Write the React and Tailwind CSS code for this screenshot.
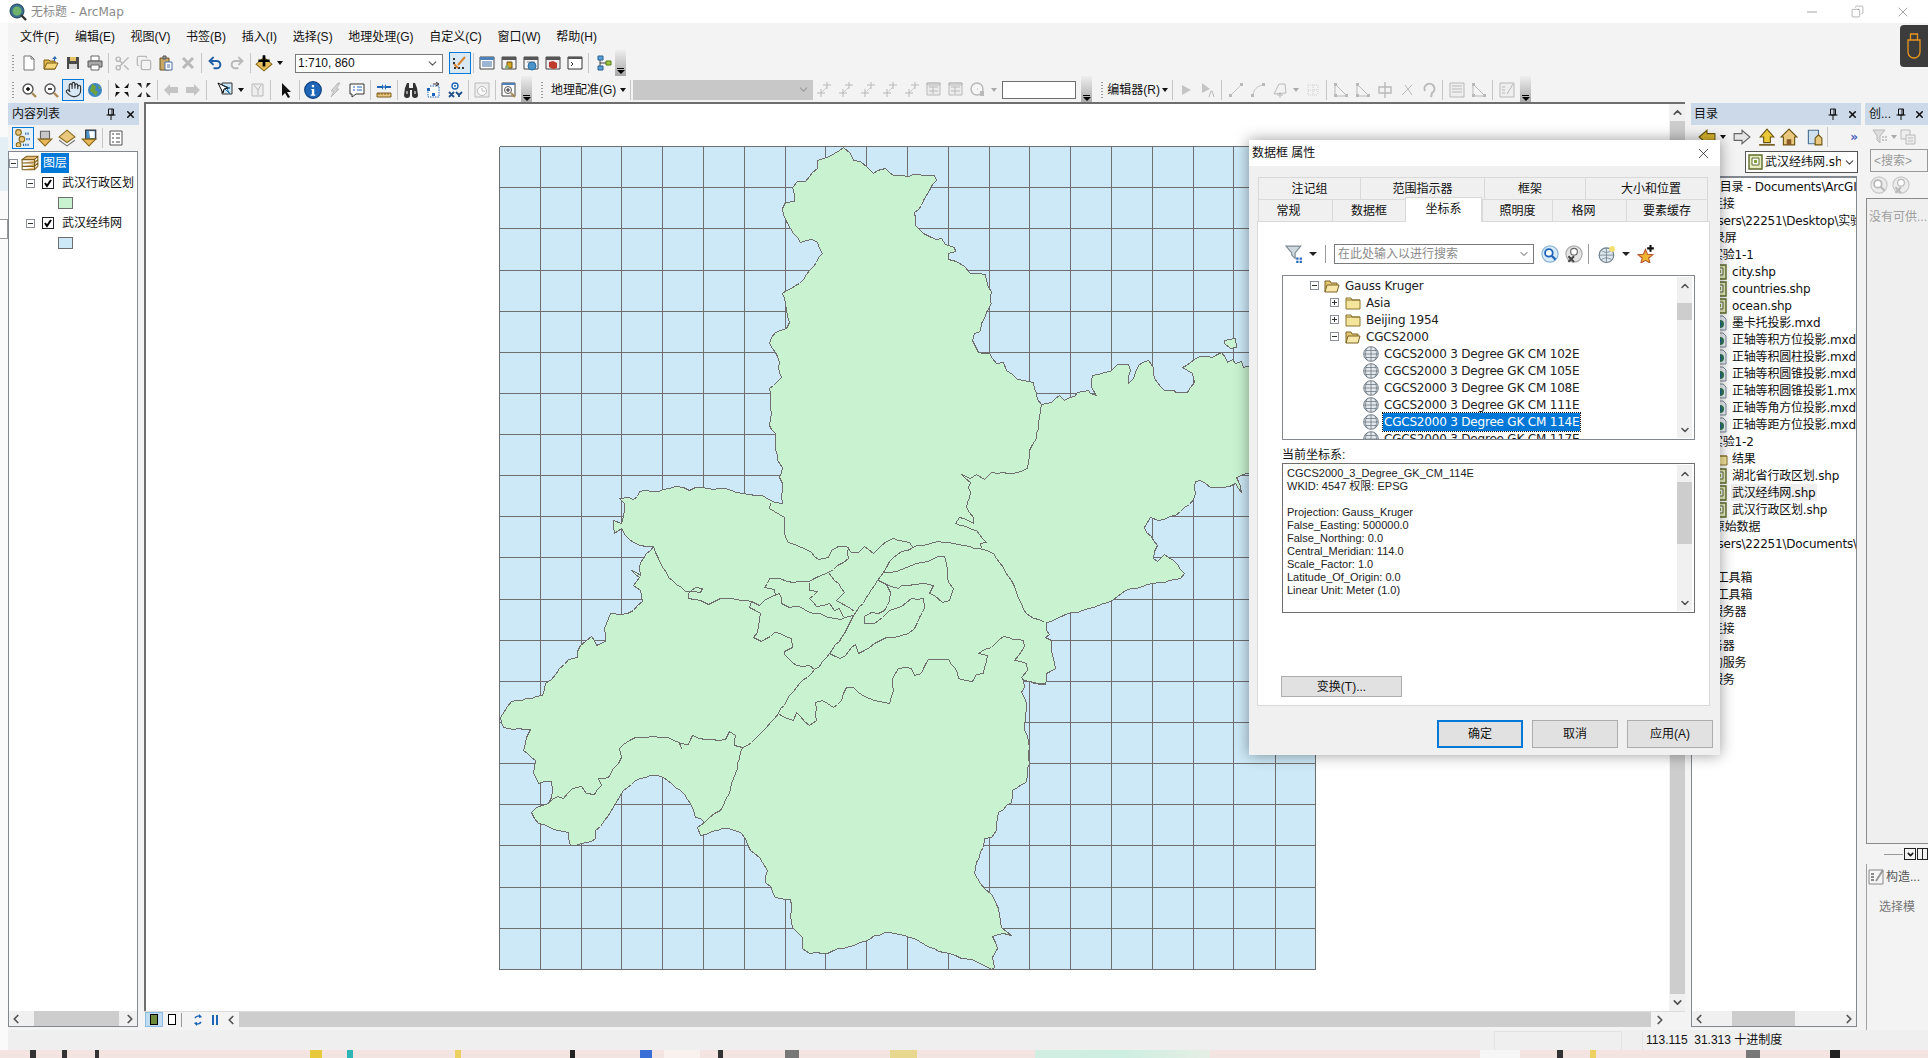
import { ChevronDown, ChevronUp, ChevronLeft, ChevronRight, Hand, Scissors, Undo2, Redo2, X, Minus, Copy } from 'lucide-react'

// ---------- map geometry, traced from the screenshot ----------
const z9 = ([x, y]) => [490 + x / 2.01, 130 + y / 3]
const z10 = ([x, y]) => [490 + x / 2.01, 560 + y / 3]
const z11 = ([x, y]) => [700 + x / 3, 500 + y / 3]

const OUTER_A = [[708,50],[722,68],[728,90],[742,93],[755,112],[767,130],[775,120],[792,114],[808,136],[838,138],[848,133],[890,135],[894,150],[880,180],[868,210],[865,225],[850,245],[852,285],[868,310],[885,322],[905,325],[912,343],[930,350],[933,362],[918,368],[918,388],[935,393],[950,408],[962,429],[992,433],[998,470],[1005,483],[1002,515],[1005,520],[995,545],[985,580],[983,602],[970,610],[967,630],[978,667],[1000,670],[1015,698],[1030,697],[1035,720],[1058,747],[1090,757],[1095,790],[1105,822],[1125,815],[1142,795],[1152,810],[1172,797],[1178,785],[1200,780],[1203,790],[1216,795],[1205,770],[1208,735],[1245,722],[1258,703],[1280,703],[1285,720],[1281,758],[1290,745],[1300,705],[1320,690],[1330,710],[1332,745],[1352,780],[1372,780],[1375,787],[1398,787],[1413,755],[1410,730],[1388,712],[1405,695],[1425,677],[1450,680],[1468,665],[1480,695],[1490,688],[1495,700],[1508,693],[1512,712],[1525,705],[1750,800],[1750,1030],[1525,1025],[1497,1040],[1508,1085],[1495,1060],[1470,1070],[1445,1070],[1425,1050],[1415,1052],[1412,1108],[1375,1155],[1340,1170],[1325,1162],[1312,1190],[1338,1245],[1330,1285],[1338,1292],[1352,1273],[1370,1290],[1392,1330]]
const OUTER_B = [[1385,55],[1330,68],[1275,90],[1250,118],[1200,145],[1165,157],[1115,187],[1115,210],[1122,222],[1114,232],[1125,240],[1128,285],[1133,325],[1115,340],[1113,372],[1070,360],[1072,380],[1065,395],[1075,430],[1072,510],[1082,560],[1078,640],[1075,665],[1048,690],[1045,725],[1020,755],[1015,810],[1005,830],[990,833],[988,860],[975,905],[970,940],[990,985],[1005,1003],[1020,1045],[1025,1100],[1045,1125],[1030,1118],[1008,1128],[1018,1165],[1008,1190],[1012,1220],[1005,1226],[965,1197],[945,1195],[920,1180],[880,1160],[840,1130],[800,1115],[770,1125],[760,1138],[730,1155],[665,1180],[640,1178],[625,1165],[625,1130],[605,1100],[600,1018],[570,1012],[562,980],[550,965],[555,930],[545,905],[520,870],[510,835],[500,815],[465,803],[420,826],[414,800],[428,785],[410,770],[400,730],[380,690],[345,650],[320,645],[290,660],[265,690],[235,765],[210,810],[210,835],[180,850],[158,855],[155,815],[135,810],[95,790],[80,755],[90,740],[115,728],[122,690],[120,662],[95,668],[85,640],[88,600],[65,570],[70,530],[78,508],[55,505],[25,500],[18,470],[40,422],[80,415],[102,405],[108,370],[130,340],[155,298],[172,292],[178,255],[200,228],[212,255],[230,243],[228,205],[240,160],[260,162],[285,150],[303,122],[300,90],[285,75],[298,50],[282,30]]
const OUTER_C = [[300,1335],[300,1295],[325,1248],[300,1245],[285,1235],[270,1215],[262,1195],[248,1208],[245,1170],[262,1178],[268,1120],[258,1105],[275,1100],[285,1108],[298,1083],[335,1082],[370,1068],[385,1072],[398,1080],[410,1072],[470,1075],[505,1090],[545,1095],[570,1115],[585,1118],[585,1060],[578,1040],[585,1010],[575,990],[570,910],[558,885],[563,850],[558,775],[582,740],[578,695],[570,665],[558,640],[570,605],[592,595],[598,575],[590,520],[585,490],[620,460],[640,420],[665,370],[655,335],[645,328],[622,335],[600,295],[585,235],[590,215],[610,213],[605,170],[615,152],[632,152],[655,115],[655,90],[690,70]]
const OUTER = [...OUTER_A.map(z9), ...OUTER_B.map(z10), ...OUTER_C.map(z9)]
const ISLAND = [[1473,630],[1495,625],[1498,650],[1485,655],[1473,640]].map(z9)

const INNER = [
  [[1105,822],[1100,880],[1095,925],[1082,960],[1078,1015],[1050,1030],[1005,1027],[990,1048],[975,1033],[962,1045],[945,1032],[962,1055],[960,1100],[955,1130],[968,1160],[968,1178],[940,1160],[933,1180],[975,1200],[995,1235],[983,1240],[985,1255]].map(z9),
  [[207,8],[203,25],[250,52],[248,95],[260,125],[300,140],[330,155],[350,178],[380,172],[390,150],[410,137],[435,137],[450,155],[470,155],[488,137],[515,158],[540,135],[575,115],[625,125],[635,143]].map(z11),
  [[160,718],[195,680],[230,640],[285,560],[340,508],[385,458],[430,398],[455,345],[520,255],[545,215],[575,170],[630,143],[695,125],[740,125],[835,145],[875,158],[905,200],[930,240],[950,295],[975,340],[995,355],[1030,365]].map(z11),
  [[545,215],[585,212],[645,188],[730,167],[738,210],[742,245],[755,265],[745,300],[722,305],[700,285],[685,278],[697,255],[668,250],[640,252],[600,255],[590,265],[570,258],[555,252],[530,240]].map(z11),
  [[555,252],[568,275],[565,300],[550,330],[530,340],[510,335],[490,348],[490,370],[520,370],[565,330],[600,318],[630,293],[665,295],[668,320],[655,350],[640,385],[620,400],[580,412],[555,410],[520,430],[472,460],[463,432],[418,473],[385,458]].map(z11),
  [...[[325,1248],[340,1300]].map(z9), ...[[355,50],[390,92],[420,95],[425,85],[410,80],[395,100],[395,115],[420,120],[437,133],[460,113]].map(z10), ...[[60,293],[150,302],[175,315],[190,300],[235,280],[240,310],[265,322],[295,317],[325,335],[355,338],[380,352],[420,357],[430,350],[455,345]].map(z11)],
  [[150,302],[145,320],[178,340],[168,395],[157,412],[180,423],[220,395],[270,415],[272,440],[248,452],[250,462],[285,495],[325,495],[340,508]].map(z11),
  [[380,215],[325,243],[258,243],[235,233],[205,235],[190,262],[218,268],[222,285]].map(z11),
  [[380,215],[430,275],[405,300],[460,332]].map(z11),
  [[325,245],[325,270],[348,272],[325,295],[345,318],[385,310],[400,330],[415,325],[425,350]].map(z11),
  [[380,215],[440,175],[440,140]].map(z11),
  [[230,638],[275,660],[285,635],[325,675],[345,660],[342,605],[362,600],[395,620],[420,600],[435,560],[455,560],[490,587],[520,600],[565,608],[575,570],[572,535],[592,503],[630,505],[638,525],[660,520],[682,478],[742,478],[762,505],[770,535],[812,543],[825,522],[845,520],[858,465],[830,458],[870,440],[905,407],[965,420],[970,438],[940,480],[975,490],[977,510],[960,530],[968,542],[1030,550]].map(z11),
  [[530,535],[505,562],[490,640],[478,700],[460,750],[428,785]].map(z10),
  [[505,562],[488,555],[490,525],[478,512],[470,538],[430,538],[405,525],[395,552],[378,550],[382,565],[378,545],[355,532],[340,530],[310,530],[290,530],[265,552],[258,565],[262,590],[245,625],[235,650],[215,655],[222,675],[208,703],[190,698],[180,678],[163,685],[145,713],[132,708],[115,730]].map(z10),
]

// breaks long segments up so the outlines look like digitised boundaries
function rough(pts, closed) {
  const list = closed ? [...pts, pts[0]] : pts
  const out = []
  for (let i = 0; i < list.length - 1; i++) {
    const [x1, y1] = list[i]
    const [x2, y2] = list[i + 1]
    const len = Math.hypot(x2 - x1, y2 - y1)
    const n = Math.max(1, Math.floor(len / 5))
    for (let k = 0; k < n; k++) {
      const t = k / n
      const x = x1 + (x2 - x1) * t
      const y = y1 + (y2 - y1) * t
      const h = Math.sin(x * 12.9 + y * 78.2) * 43758
      const off = k === 0 ? 0 : (h - Math.floor(h) - 0.5) * 1.8
      out.push([Math.round(x + (off * (y2 - y1)) / (len || 1)) + 0.5, Math.round(y - (off * (x2 - x1)) / (len || 1)) + 0.5])
    }
  }
  out.push([Math.round(list[list.length - 1][0]) + 0.5, Math.round(list[list.length - 1][1]) + 0.5])
  return out.map((p, i) => (i ? 'L' : 'M') + p[0] + ' ' + p[1]).join(' ')
}

const GRID_X = [498.5, 539.5, 580.5, 620.5, 661.5, 702.5, 743.5, 784.5, 824.5, 865.5, 906.5, 947.5, 988.5, 1028.5, 1069.5, 1110.5, 1151.5, 1192.5, 1232.5, 1274.5, 1314.5]
const GRID_Y = [146.5, 187.5, 228.5, 270.5, 311.5, 352.5, 393.5, 434.5, 475.5, 516.5, 557.5, 599.5, 640.5, 681.5, 722.5, 763.5, 804.5, 845.5, 887.5, 928.5, 969.5]

function MapView() {
  return (
    <svg width="1523" height="907" viewBox="145 104 1523 907" className="block">
      <rect x="498.5" y="146.5" width="816" height="823" fill="#cde8f7" />
      <g stroke="#6e6e6e" strokeWidth="1" shapeRendering="crispEdges">
        {GRID_X.map(x => <line key={x} x1={x} x2={x} y1="146.5" y2="969.5" />)}
        {GRID_Y.map(y => <line key={y} x1="498.5" x2="1314.5" y1={y} y2={y} />)}
      </g>
      <g fill="#c8f2d0" stroke="#6e6e6e" strokeWidth="1" shapeRendering="crispEdges">
        <path d={rough(OUTER, true) + ' Z'} />
        <path d={rough(ISLAND, true) + ' Z'} />
      </g>
      <g fill="none" stroke="#6e6e6e" strokeWidth="1" shapeRendering="crispEdges">
        {INNER.map((p, i) => <path key={i} d={rough(p, false)} />)}
      </g>
    </svg>
  )
}

// ---------- small toolbar icons ----------
const S = ({ children, size = 16 }) => (
  <svg width={size} height={size} viewBox="0 0 16 16" className="block">{children}</svg>
)
const GREY = '#b9b9b9'
const ICONS = {
  new: <S><path d="M3 1h7l3 3v11H3z" fill="#fff" stroke="#777" /><path d="M10 1v3h3" fill="none" stroke="#777" /></S>,
  open: <S><path d="M1 14V5h5l1 1h5v8z" fill="#e0b94f" stroke="#7a5a10" /><path d="M1 14l3-6h11l-3 6z" fill="#f5d77c" stroke="#7a5a10" /><path d="M9 4l3-3 2 3h-2v2h-1V4z" fill="#2b6cb0" /></S>,
  save: <S><path d="M2 2h12v12H2z" fill="#4a4a4a" /><path d="M5 2h6v4H5z" fill="#e3c46a" /><path d="M4 9h8v5H4z" fill="#d9d9d9" /></S>,
  print: <S><path d="M4 1h8v5H4z" fill="#fff" stroke="#666" /><path d="M1 6h14v6H1z" fill="#a9a9a9" stroke="#555" /><path d="M4 10h8v5H4z" fill="#fff" stroke="#666" /></S>,
  cut: <Scissors size={17} color={GREY} />,
  copy: <Copy size={16} color={GREY} />,
  paste: <S><path d="M2 3h9v12H2z" fill="#c9a769" stroke="#6b5426" /><path d="M5 1h3v3H5z" fill="#999" stroke="#555" /><path d="M7 7h7v8H7z" fill="#fff" stroke="#4a6fa5" /><path d="M9 10h3M9 12h3" stroke="#4a6fa5" /></S>,
  del: <S><path d="M3 3l10 10M13 3L3 13" stroke={GREY} strokeWidth="3" /></S>,
  undo: <Undo2 size={16} color="#1f5fa8" strokeWidth={3} />,
  redo: <Redo2 size={16} color={GREY} strokeWidth={3} />,
  add: <S size={18}><path d="M8 3l7 6-7 6-7-6z" fill="#e9bf5b" stroke="#8a6a1c" /><path d="M8 1v10M3 6h10" stroke="#000" strokeWidth="2.4" /></S>,
  edit: <S><path d="M2 13h12" stroke="#333" strokeDasharray="2 2" strokeWidth="2" /><path d="M2 9l4 4M13 2L6 10" stroke="#d9822b" strokeWidth="2" /><path d="M2 3v6" stroke="#333" strokeDasharray="2 2" strokeWidth="2" /></S>,
  win1: <S><path d="M1 2h14v12H1z" fill="#fff" stroke="#444" /><path d="M1 2h14v3H1z" fill="#4d7fb8" /><path d="M3 7h10M3 9h10M3 11h10" stroke="#3a6ea5" /></S>,
  win2: <S><path d="M1 2h14v12H1z" fill="#f5f5f5" stroke="#444" /><path d="M1 2h14v3H1z" fill="#555" /><path d="M6 7h5v6H6z" fill="#d8a520" stroke="#6b5410" /><circle cx="6" cy="12" r="2" fill="#8a7" /></S>,
  win3: <S><path d="M1 2h14v12H1z" fill="#f5f5f5" stroke="#444" /><path d="M1 2h14v3H1z" fill="#555" /><path d="M4 7h8" stroke="#888" /><circle cx="9" cy="11" r="4" fill="#4b93c9" stroke="#2a6d9e" /></S>,
  win4: <S><path d="M1 2h14v12H1z" fill="#eee" stroke="#444" /><path d="M1 2h14v3H1z" fill="#555" /><path d="M4 7l4-1 4 2v5l-4 1-4-2z" fill="#c0392b" /></S>,
  win5: <S><path d="M1 2h14v12H1z" fill="#fff" stroke="#333" /><path d="M1 2h14v2H1z" fill="#555" /><path d="M4 7l2 2-2 2" fill="none" stroke="#333" /></S>,
  model: <S><path d="M2 1h5v4H2zM2 11h5v4H2z" fill="#5aa0dc" stroke="#24608f" /><path d="M10 6h5v4h-5z" fill="#9fc93c" stroke="#557a12" /><path d="M4 5v6M4 8h6" stroke="#444" /></S>,
  zin: <S><circle cx="7" cy="7" r="5" fill="#fff" stroke="#555" strokeWidth="1.4" /><path d="M5 7h4M7 5v4" stroke="#000" strokeWidth="1.4" /><path d="M11 11l4 4" stroke="#a85" strokeWidth="2.4" /></S>,
  zout: <S><circle cx="7" cy="7" r="5" fill="#fff" stroke="#555" strokeWidth="1.4" /><path d="M5 7h4" stroke="#000" strokeWidth="1.4" /><path d="M11 11l4 4" stroke="#a85" strokeWidth="2.4" /></S>,
  hand: <Hand size={17} color="#333" strokeWidth={1.6} />,
  globe: <S><circle cx="8" cy="8" r="7" fill="#3f87c4" /><path d="M5 2l4 2-1 4 3 2-2 4-3-3-3-2 1-4z" fill="#6fa33c" /><path d="M11 3l3 3-2 1z" fill="#6fa33c" /></S>,
  fin: <S><path d="M1 1l5 5H2zM15 1l-5 5h4zM1 15l5-5H2zM15 15l-5-5h4z" fill="#111" /></S>,
  fout: <S><path d="M6 6L1 1h4zM10 6l5-5h-4zM6 10l-5 5h4zM10 10l5 5h-4z" fill="#222" /></S>,
  back: <S><path d="M1 8l6-6v3h8v6H7v3z" fill="#c4c4c4" /></S>,
  fwd: <S><path d="M15 8L9 2v3H1v6h8v3z" fill="#c4c4c4" /></S>,
  sel: <S><path d="M5 1h10v11H5z" fill="#cfe6f5" stroke="#333" /><path d="M6 5l7 7M5 3l8 3-3 1 3 5" fill="#fff" stroke="#1d6fa8" /><path d="M1 1l5 10 1-4 4-1z" fill="#fff" stroke="#000" /></S>,
  clear: <S><path d="M3 2h11v12H3z" fill="#eee" stroke={GREY} /><path d="M5 3l4 5 3-5M9 8v5" fill="none" stroke={GREY} /></S>,
  arrow: <S><path d="M4 1l9 9H9l3 5-2 1-3-5-3 3z" fill="#111" /></S>,
  info: <S size={18}><circle cx="8" cy="8" r="7.4" fill="#1f66b8" stroke="#0e3e7c" /><path d="M7 3.5h2v2H7zM6.5 7h2.6v5H10v1H6v-1h1V8h-.5z" fill="#fff" /></S>,
  bolt: <S><path d="M11 1L4 9h3l-3 6 8-8H9l4-6z" fill="#d6d6d6" stroke={GREY} /></S>,
  popup: <S><path d="M1 2h14v10H7l-4 3v-3H1z" fill="#fff" stroke="#333" /><path d="M4 5h2M8 5h5M4 8h2M8 8h5" stroke="#1f66b8" /></S>,
  measure: <S><path d="M1 11h14v4H1z" fill="#e9c77d" stroke="#7c5f1e" /><path d="M3 11v2M6 11v2M9 11v2M12 11v2" stroke="#7c5f1e" /><path d="M1 5h5M10 5h5" stroke="#1f66b8" strokeWidth="2" /><path d="M6 2v6l2-3zM10 2v6L8 5z" fill="#1f66b8" /></S>,
  bino: <S><path d="M2 6l2-5h2v5h4V1h2l2 5 1 7a2 2 0 0 1-6 0V8H7v5a2 2 0 0 1-6 0z" fill="#333" /><path d="M3 9h2v3H3zM11 9h2v3h-2z" fill="#999" /></S>,
  route: <S><path d="M5 4h9v11H3V8" fill="#fff" stroke="#1f66b8" strokeDasharray="1.5 1" /><path d="M8 2h5M11 0l3 2-3 2" fill="none" stroke="#333" /><rect x="2" y="6" width="3" height="3" fill="#1f66b8" /><rect x="7" y="11" width="3" height="3" fill="#1f66b8" /></S>,
  xy: <S><circle cx="8" cy="4" r="3" fill="#fff" stroke="#1f66b8" strokeWidth="1.4" /><circle cx="8" cy="4" r="1" fill="#1f66b8" /><path d="M2 10l5 5M7 10l-5 5M9 10l3 3 3-3M12 13v2" fill="none" stroke="#1f4f88" strokeWidth="1.8" /></S>,
  time: <S><path d="M1 1h14v14H1z" fill="#eee" stroke={GREY} /><circle cx="8" cy="9" r="4.5" fill="#fff" stroke={GREY} /><path d="M8 6v3h3" fill="none" stroke={GREY} /></S>,
  mag: <S><path d="M1 1h13v13H1z" fill="#fff" stroke="#444" /><path d="M1 1h13v2H1z" fill="#4d7fb8" /><circle cx="7" cy="8" r="3.5" fill="#fff" stroke="#555" /><path d="M5 8h4M7 6v4" stroke="#222" /><path d="M10 11l4 4" stroke="#a85" strokeWidth="2" /></S>,
  geo: <S><path d="M1 11h8M5 7v8M7 3h8M11 0v7" stroke={GREY} /><path d="M5 11l6-6" stroke={GREY} strokeDasharray="2 1" /></S>,
  geoBox: <S><path d="M1 1h13v12H1z" fill="#ececec" stroke={GREY} /><path d="M1 1h13v2H1zM3 5h9M3 9h9M7 5v7" fill="none" stroke={GREY} /></S>,
  rot: <S><circle cx="7" cy="7" r="6" fill="#f5f5f5" stroke={GREY} strokeWidth="1.5" /><path d="M7 7h1" stroke={GREY} /><path d="M10 9h4v5h-4z" fill={GREY} /></S>,
  seg: <S><path d="M2 14L14 2" stroke="#c4c4c4" /><rect x="1" y="12" width="3" height="3" fill={GREY} /><rect x="12" y="1" width="3" height="3" fill={GREY} /></S>,
  curve: <S><path d="M3 14C3 8 7 4 13 3" fill="none" stroke="#c4c4c4" /><rect x="1" y="12" width="3" height="3" fill={GREY} /><rect x="12" y="1" width="3" height="3" fill={GREY} /></S>,
  poly: <S><path d="M2 12L7 2h6l1 9z" fill="none" stroke={GREY} /><path d="M8 10v6M5 13h6" stroke={GREY} /></S>,
  play: <S><path d="M4 3l9 5-9 5z" fill="#c4c4c4" /></S>,
  playA: <S><path d="M2 1l8 6-8 4z" fill="#c4c4c4" /><path d="M9 15l2-6h1l2 6" fill="none" stroke={GREY} /></S>,
  nodes: <S><path d="M3 3h10M3 8h10M3 13h10M3 3v10M8 3v10M13 3v10" stroke="#cfcfcf" strokeDasharray="1 1" /></S>,
  tri: <S><path d="M2 14L2 2l12 12z" fill="none" stroke={GREY} /><rect x="1" y="1" width="3" height="3" fill={GREY} /><rect x="1" y="12" width="3" height="3" fill={GREY} /><rect x="12" y="12" width="3" height="3" fill={GREY} /></S>,
  split: <S><path d="M2 5h12v6H2zM8 0v16" fill="none" stroke={GREY} strokeWidth="1.4" /></S>,
  cross: <S><path d="M3 13L13 3M6 3l7 10" stroke={GREY} /></S>,
  loop: <S><path d="M4 9a5 5 0 1 1 7 2l-1 4" fill="none" stroke={GREY} strokeWidth="2" /></S>,
  attr: <S><path d="M1 1h14v14H1z" fill="#eee" stroke={GREY} /><path d="M3 4h10M3 7h10M3 10h10" stroke={GREY} /></S>,
  sketch: <S><path d="M1 1h14v14H1z" fill="#eee" stroke={GREY} /><path d="M8 12L14 2M3 5h3M3 8h3M3 11h3" stroke={GREY} /></S>,
  tocList: <S size={18}><circle cx="4" cy="3" r="2.5" fill="#e9c77d" stroke="#8a6a1c" /><circle cx="7" cy="9" r="2.5" fill="#e9c77d" stroke="#8a6a1c" /><circle cx="4" cy="14" r="2" fill="#e9c77d" stroke="#8a6a1c" /><path d="M10 4h4M11 9h4M8 14h6" stroke="#1f66b8" strokeDasharray="1 1" strokeWidth="2" /></S>,
  tocDb: <S size={18}><path d="M4 2h8v7H4z" fill="#c8c8c8" stroke="#666" /><path d="M2 9h12l-6 6z" fill="#e9b95a" stroke="#8a6a1c" /></S>,
  tocLayers: <S size={18}><path d="M8 1l7 6-7 5-7-5z" fill="#e9c77d" stroke="#8a6a1c" /><path d="M1 10l7 5 7-5" fill="none" stroke="#777" /></S>,
  tocSel: <S size={18}><path d="M5 1h9v8H5z" fill="#4b93c9" stroke="#333" /><path d="M8 2h5v6H9z" fill="#fff" /><path d="M2 9h12l-6 6z" fill="#e9b95a" stroke="#8a6a1c" /></S>,
  tocOpt: <S><path d="M2 1h12v14H2z" fill="#fff" stroke="#555" /><path d="M4 4h2M8 4h4M4 8h2M8 8h4M4 12h2M8 12h4" stroke="#444" /></S>,
  catBack: <S size={18}><path d="M1 8l7-6v3h7v6H8v3z" fill="#d8b52f" stroke="#6b5410" /></S>,
  catFwd: <S size={18}><path d="M15 8L8 2v3H1v6h7v3z" fill="#e6e6e6" stroke="#666" /></S>,
  catUp: <S size={18}><path d="M8 1l6 7h-3v5H5V8H2z" fill="#e9c936" stroke="#6b5410" /><path d="M1 15h14" stroke="#6b5410" strokeWidth="1.4" /></S>,
  catHome: <S size={18}><path d="M8 1L1 8h2v7h10V8h2z" fill="#e9c77d" stroke="#6b5410" /><path d="M6 10h4v5H6z" fill="#8a5a2b" /></S>,
  catDb: <S size={18}><path d="M3 2h9v12H3z" fill="#cfe0ee" stroke="#4a6f8f" /><path d="M9 9l3-3 3 3v6H9z" fill="#e9c77d" stroke="#6b5410" /></S>,
  shp: <S><path d="M1 1h13v14H1z" fill="#e7edc0" stroke="#5d6b2a" strokeWidth="1.4" /><path d="M4 4h7v7H4z" fill="#fff" stroke="#5d6b2a" /><path d="M6 6h3v3H6z" fill="#7fa33a" /></S>,
  mxd: <S><path d="M2 1h9l3 3v11H2z" fill="#eef3f8" stroke="#7a8a9a" /><circle cx="8" cy="9" r="4" fill="#2f7a5a" /><path d="M6 7h3v4H6z" fill="#2366a8" /></S>,
  filter: <S size={18}><path d="M1 1h13L9 7v5L6 9V7z" fill="#cfd8dc" stroke="#7b8a92" /><path d="M10 11h2v2h-2zM13 11h2v2h-2zM10 14h2v2h-2zM13 14h2v2h-2z" fill="#1f66b8" /></S>,
  search: <S size={18}><circle cx="8" cy="8" r="7.2" fill="#d9ebf8" stroke="#8ab6d6" /><circle cx="7" cy="7" r="3.4" fill="#fff" stroke="#1f66b8" strokeWidth="1.6" /><path d="M9.5 9.5l3.5 3.5" stroke="#1f66b8" strokeWidth="2" /></S>,
  unsearch: <S size={18}><circle cx="8" cy="8" r="7.2" fill="#e4e4e4" stroke="#aaa" /><circle cx="8" cy="6" r="3" fill="#fff" stroke="#666" /><path d="M3 10l5 5M8 10l-5 5" stroke="#444" strokeWidth="1.8" /></S>,
  world: <S size={18}><circle cx="7.5" cy="9" r="6.5" fill="#dfe7ee" stroke="#6d7f8c" /><path d="M1 9h13M7.5 2.5v13M3 5c3 2 6 2 9 0M3 13c3-2 6-2 9 0" fill="none" stroke="#6d7f8c" strokeWidth=".7" /><circle cx="12.5" cy="3.5" r="2.6" fill="#f4e070" /></S>,
  star: <S size={18}><path d="M7.5 4l1.8 4.2 4.7.4-3.6 3 1.1 4.4-4-2.4-4 2.4 1.1-4.4-3.6-3 4.7-.4z" fill="#f2b632" stroke="#b5562a" /><path d="M12 0v6M9 3h6" stroke="#111" strokeWidth="1.8" /></S>,
  folderOpen: <S><path d="M1 14V3h5l1 2h6v2" fill="#e3c873" stroke="#7a6224" /><path d="M1 14l2-7h12l-2 7z" fill="#f7e7a8" stroke="#7a6224" /></S>,
  folder: <S><path d="M1 14V3h5l1 2h8v9z" fill="#f5e59c" stroke="#8a7430" /><path d="M1 5h14" stroke="#8a7430" /></S>,
  gridGlobe: <S><circle cx="8" cy="8" r="7.3" fill="#e4e8ec" stroke="#6f7b85" /><path d="M1 8h14M8 1v14M2.5 4.5h11M2.5 11.5h11M4 2c-2 4-2 8 0 12M12 2c2 4 2 8 0 12" fill="none" stroke="#6f7b85" strokeWidth=".8" /></S>,
  layers: <S size={18}><path d="M1 5h11l3-3H5zM1 8h11l3-3M1 11h11l3-3M1 14h11l3-3M1 5v9M12 5v9M15 2v9" fill="#e6bc74" stroke="#7c5f1e" strokeWidth=".9" /></S>,
  gCreate: <S><path d="M1 1h12L8 7v7L5 11V7z" fill="#ddd" stroke={GREY} /><path d="M10 8h2M13 8h2M10 11h2M13 11h2" stroke={GREY} strokeWidth="1.4" /></S>,
  gPages: <S><path d="M1 1h9v9H1z" fill="#eee" stroke={GREY} /><path d="M6 6h9v9H6z" fill="#eee" stroke={GREY} /><path d="M8 9h5M8 12h5" stroke={GREY} /></S>,
  gSearch: <S size={18}><circle cx="8" cy="8" r="7.2" fill="#ececec" stroke="#c8c8c8" /><circle cx="7" cy="7" r="3.4" fill="#fff" stroke={GREY} strokeWidth="1.6" /><path d="M9.5 9.5l3.5 3.5" stroke={GREY} strokeWidth="2" /></S>,
  gUnsearch: <S size={18}><circle cx="8" cy="8" r="7.2" fill="#ececec" stroke="#c8c8c8" /><circle cx="8" cy="6" r="3" fill="#fff" stroke={GREY} /><path d="M3 10l5 5M8 10l-5 5" stroke={GREY} strokeWidth="1.8" /></S>,
  sketchColor: <S><path d="M1 1h14v14H1z" fill="#f5f5f5" stroke="#888" /><path d="M8 12L15 1" stroke="#999" strokeWidth="2" /><path d="M3 5h3M3 8h3M3 11h3" stroke="#666" strokeWidth="1.4" /></S>,
}

const Tool = ({ name }) => <div className="w-[22px] h-[22px] flex items-center justify-center shrink-0">{ICONS[name]}</div>
const Sep = () => <div className="w-[5px] h-[20px] flex justify-center shrink-0"><div className="w-px h-full bg-[#c6c6c6]" /></div>
const Drop = ({ grey }) => (
  <div className="w-[10px] h-[22px] flex items-center justify-center shrink-0">
    <div className={`w-0 h-0 border-x-[3px] border-x-transparent border-t-[4px] ${grey ? 'border-t-[#aaaaaa]' : 'border-t-[#111]'}`} />
  </div>
)
const Grip = () => (
  <div className="w-[10px] h-[20px] flex flex-col items-center justify-center gap-[2px] shrink-0">
    {[0, 1, 2, 3, 4, 5].map(i => <div key={i} className="w-[2px] h-px bg-[#9a9a9a]" />)}
  </div>
)
const ToolEnd = () => (
  <div className="w-[11px] h-full flex flex-col items-center justify-end pb-[2px] bg-gradient-to-b from-[#eeeeee] to-[#a8a8a8] shrink-0">
    <div className="w-[7px] h-px bg-black mb-px" />
    <div className="w-0 h-0 border-x-[4px] border-x-transparent border-t-[4px] border-t-black" />
  </div>
)
const Pin = () => (
  <svg width="10" height="12" viewBox="0 0 10 12" className="block"><path d="M2.5 1h5v6h-5zM6 1v6M0.5 7h9M5 7v5" fill="none" stroke="#111" /></svg>
)
const PanelX = () => <X size={11} color="#111" strokeWidth={3.4} />

// ---------- top chrome ----------
const MENUS = ['文件(F)', '编辑(E)', '视图(V)', '书签(B)', '插入(I)', '选择(S)', '地理处理(G)', '自定义(C)', '窗口(W)', '帮助(H)']

function TitleBar() {
  return (
    <div className="h-[23px] bg-white flex items-center shrink-0 pl-[9px]">
      <svg width="18" height="18" viewBox="0 0 18 18" className="block shrink-0">
        <circle cx="8" cy="8" r="7" fill="#3a6f8f" stroke="#1f4358" />
        <circle cx="8" cy="8" r="4.5" fill="#6fb36a" />
        <path d="M12 12l5 5" stroke="#333" strokeWidth="2.4" />
      </svg>
      <span className="ml-[4px] text-[12px] text-[#8a8a8a] [font-family:'DejaVu_Sans','Noto_Sans_CJK_SC',sans-serif]">无标题 - ArcMap</span>
      <div className="ml-auto flex items-center pr-[17px] gap-[31px] text-[#777]">
        <Minus size={16} strokeWidth={1} />
        <Copy size={13} strokeWidth={1} className="-scale-x-100" />
        <X size={16} strokeWidth={1} />
      </div>
    </div>
  )
}

function Toolbar1() {
  return (
    <div className="h-[26px] flex items-center">
      <Grip />
      <Tool name="new" /><Tool name="open" /><Tool name="save" /><Tool name="print" /><Sep />
      <Tool name="cut" /><Tool name="copy" /><Tool name="paste" /><Tool name="del" /><Sep />
      <Tool name="undo" /><Tool name="redo" /><Sep />
      <Tool name="add" /><Drop />
      <div className="ml-[10px] w-[148px] h-[19px] bg-white border border-[#7a7a7a] flex items-center pl-[2px] pr-[3px] text-[12px] text-[#111]">
        <span className="flex-1">1:710, 860</span>
        <ChevronDown size={13} color="#555" />
      </div>
      <div className="ml-[6px] w-[22px] h-[22px] border border-[#0078d7] bg-[#d8e8f5] flex items-center justify-center">{ICONS.edit}</div>
      <Sep />
      <Tool name="win1" /><Tool name="win2" /><Tool name="win3" /><Tool name="win4" /><Tool name="win5" /><Sep />
      <div className="ml-[2px]"><Tool name="model" /></div>
      <div className="h-[26px]"><ToolEnd /></div>
    </div>
  )
}

function Toolbar2() {
  return (
    <div className="h-[27px] flex items-center">
      <Grip />
      <Tool name="zin" /><Tool name="zout" />
      <div className="w-[22px] h-[22px] border border-[#0078d7] bg-[#d8e8f5] flex items-center justify-center shrink-0">{ICONS.hand}</div>
      <Tool name="globe" /><Sep />
      <Tool name="fin" /><Tool name="fout" /><Sep />
      <Tool name="back" /><Tool name="fwd" /><Sep />
      <div className="ml-[5px]"><Tool name="sel" /></div><Drop />
      <Tool name="clear" /><Sep />
      <div className="ml-[2px]"><Tool name="arrow" /></div><Sep />
      <Tool name="info" /><Tool name="bolt" /><Tool name="popup" /><Sep />
      <Tool name="measure" /><Sep />
      <Tool name="bino" /><Tool name="route" /><Tool name="xy" /><Sep />
      <Tool name="time" /><Sep />
      <Tool name="mag" />
      <div className="h-[27px] ml-px"><ToolEnd /></div>
      {/* georeferencing toolbar */}
      <div className="ml-[5px]"><Grip /></div>
      <span className="ml-[4px] text-[12px] text-[#111]">地理配准(G)</span>
      <div className="ml-[2px]"><Drop /></div>
      <Sep />
      <div className="w-[180px] h-[20px] bg-[#c8c8c8] flex items-center justify-end pr-[3px] shrink-0">
        <ChevronDown size={13} color="#9a9a9a" />
      </div>
      <Tool name="geo" /><Tool name="geo" /><Tool name="geo" /><Tool name="geo" />
      <Tool name="geo" /><Tool name="geoBox" /><Tool name="geoBox" /><Tool name="rot" /><Drop grey />
      <div className="ml-[3px] w-[74px] h-[18px] bg-white border border-[#6e6e6e] shrink-0" />
      <div className="ml-[5px] h-[27px]"><ToolEnd /></div>
      {/* editor toolbar */}
      <div className="ml-[5px]"><Grip /></div>
      <span className="text-[12px] text-[#111]">编辑器(R)</span>
      <Drop />
      <Sep />
      <Tool name="play" /><Tool name="playA" /><Sep />
      <div className="ml-px"><Tool name="seg" /></div><Tool name="curve" /><Tool name="poly" /><Drop grey />
      <div className="ml-px"><Tool name="nodes" /></div><Sep />
      <div className="ml-px"><Tool name="tri" /></div><Tool name="tri" /><Tool name="split" /><Tool name="cross" /><Tool name="loop" /><Sep />
      <div className="ml-px"><Tool name="attr" /></div><Tool name="tri" /><Sep />
      <div className="ml-px"><Tool name="sketch" /></div>
      <div className="h-[27px] ml-[2px]"><ToolEnd /></div>
    </div>
  )
}

// ---------- left table of contents ----------
const ExpandBox = ({ plus }) => (
  <div className="w-[9px] h-[9px] border border-[#8a8f99] bg-white relative shrink-0">
    <div className="absolute left-px right-px top-[3px] h-px bg-[#333]" />
    {plus && <div className="absolute top-px bottom-px left-[3px] w-px bg-[#333]" />}
  </div>
)
const Check = () => (
  <div className="w-[12px] h-[12px] border border-[#222] bg-white flex items-center justify-center shrink-0">
    <svg width="10" height="10" viewBox="0 0 10 10"><path d="M2 5l2 3 4-6" fill="none" stroke="#000" strokeWidth="2" /></svg>
  </div>
)

function TocPanel() {
  return (
    <div className="w-[131px] flex flex-col shrink-0">
      <div className="h-[22px] bg-[#cbd9e8] flex items-center pl-[4px] text-[12px] text-[#111] shrink-0">
        <span className="flex-1">内容列表</span>
        <div className="mr-[9px]"><Pin /></div>
        <div className="mr-[3px]"><PanelX /></div>
      </div>
      <div className="h-[26px] flex items-center pl-[4px] shrink-0">
        <div className="w-[22px] h-[22px] border border-[#0078d7] bg-[#e6f0f8] flex items-center justify-center">{ICONS.tocList}</div>
        <Tool name="tocDb" /><Tool name="tocLayers" /><Tool name="tocSel" /><Sep /><Tool name="tocOpt" />
      </div>
      <div className="flex-1 bg-white border border-[#828790] flex flex-col min-h-0 mb-[3px] mr-px text-[12px] text-[#111]">
        <div className="h-[20px] mt-[1px] flex items-center">
          <ExpandBox />
          <div className="ml-[3px]">{ICONS.layers}</div>
          <span className="ml-[2px] h-[20px] px-[2px] leading-[20px] bg-[#0078d7] text-white">图层</span>
        </div>
        <div className="h-[20px] flex items-center pl-[17px]">
          <ExpandBox />
          <div className="ml-[7px]"><Check /></div>
          <span className="ml-[8px] whitespace-nowrap">武汉行政区划</span>
        </div>
        <div className="h-[20px] flex items-center pl-[49px]">
          <div className="w-[15px] h-[12px] bg-[#c8f2d0] border border-[#6e6e6e]" />
        </div>
        <div className="h-[20px] flex items-center pl-[17px]">
          <ExpandBox />
          <div className="ml-[7px]"><Check /></div>
          <span className="ml-[8px] whitespace-nowrap">武汉经纬网</span>
        </div>
        <div className="h-[20px] flex items-center pl-[49px]">
          <div className="w-[15px] h-[12px] bg-[#cde8f7] border border-[#6e6e6e]" />
        </div>
        <div className="flex-1" />
        <div className="h-[15px] flex bg-[#f0f0f0] items-center">
          <ChevronLeft size={14} color="#555" strokeWidth={3} />
          <div className="ml-[11px] w-[85px] h-full bg-[#cdcdcd]" />
          <div className="ml-auto"><ChevronRight size={14} color="#555" strokeWidth={3} /></div>
        </div>
      </div>
    </div>
  )
}

// ---------- map view column ----------
function MapColumn() {
  return (
    <div className="w-[1541px] ml-[5px] flex flex-col shrink-0 mb-[3px]">
      <div className="flex-1 min-h-0 flex border-t-2 border-l-2 border-[#6e6e6e] -mt-px">
        <div className="w-[1523px] bg-white overflow-hidden">
          <MapView />
        </div>
        <div className="w-[15px] ml-px flex flex-col items-center bg-[#f0f0f0]">
          <div className="h-[17px] flex items-center"><ChevronUp size={13} color="#505050" strokeWidth={3} /></div>
          <div className="w-full flex-1 bg-[#cdcdcd]" />
          <div className="h-[17px] flex items-center"><ChevronDown size={13} color="#505050" strokeWidth={3} /></div>
        </div>
      </div>
      <div className="h-[16px] flex items-center border-t border-[#dcdcdc] shrink-0">
        <div className="w-[18px] h-[15px] ml-[1px] bg-[#bfdcf3] border border-[#8cbce4] flex items-center justify-center">
          <div className="w-[8px] h-[11px] bg-[#6c8a3a] border border-black" />
        </div>
        <div className="w-[18px] h-[15px] flex items-center justify-center">
          <div className="w-[8px] h-[11px] bg-white border border-black" />
        </div>
        <div className="w-px h-[14px] bg-[#9a9a9a]" />
        <div className="ml-[8px] w-[16px] flex justify-center">
          <svg width="10" height="12" viewBox="0 0 10 12"><path d="M8 3a4 4 0 0 0-6 1M2 9a4 4 0 0 0 6-1" fill="none" stroke="#1f66b8" strokeWidth="1.5" /><path d="M6 0l3 3-3 1zM4 12L1 9l3-1z" fill="#1f66b8" /></svg>
        </div>
        <div className="w-[18px] flex justify-center gap-[2px]">
          <div className="w-[2px] h-[10px] bg-[#1f66b8]" /><div className="w-[2px] h-[10px] bg-[#1f66b8]" />
        </div>
        <ChevronLeft size={14} color="#555" strokeWidth={3} />
        <div className="ml-[1px] w-[1412px] h-[15px] bg-[#cdcdcd]" />
        <ChevronRight size={14} color="#555" strokeWidth={3} className="ml-[2px]" />
      </div>
    </div>
  )
}

// ---------- catalog ----------
const CATALOG = [
  { t: '主目录 - Documents\\ArcGIS', c: 'pl-[16px]' },
  { t: '连接', c: 'pl-[19px]' },
  { t: 'C:\\Users\\22251\\Desktop\\实验', c: 'pl-[1px]' },
  { t: '录屏', c: 'pl-[21px]' },
  { t: '实验1-1', c: 'pl-[19px]' },
  { t: 'city.shp', i: 'shp' },
  { t: 'countries.shp', i: 'shp' },
  { t: 'ocean.shp', i: 'shp' },
  { t: '墨卡托投影.mxd', i: 'mxd' },
  { t: '正轴等积方位投影.mxd', i: 'mxd' },
  { t: '正轴等积圆柱投影.mxd', i: 'mxd' },
  { t: '正轴等积圆锥投影.mxd', i: 'mxd' },
  { t: '正轴等积圆锥投影1.mxd', i: 'mxd' },
  { t: '正轴等角方位投影.mxd', i: 'mxd' },
  { t: '正轴等距方位投影.mxd', i: 'mxd' },
  { t: '实验1-2', c: 'pl-[19px]' },
  { t: '结果', i: 'folder' },
  { t: '湖北省行政区划.shp', i: 'shp' },
  { t: '武汉经纬网.shp', i: 'shp', hl: true },
  { t: '武汉行政区划.shp', i: 'shp' },
  { t: '原始数据', c: 'pl-[21px]' },
  { t: 'C:\\Users\\22251\\Documents\\', c: 'pl-[1px]' },
  { t: '', c: '' },
  { t: '的工具箱', c: 'pl-[13px]' },
  { t: '统工具箱', c: 'pl-[13px]' },
  { t: '服务器', c: 'pl-[19px]' },
  { t: '连接', c: 'pl-[19px]' },
  { t: '务器', c: 'pl-[19px]' },
  { t: '的服务', c: 'pl-[19px]' },
  { t: '服务', c: 'pl-[19px]' },
]

function CatalogPanel() {
  return (
    <div className="w-[170px] ml-[6px] flex flex-col shrink-0 [font-family:'DejaVu_Sans','Noto_Sans_CJK_SC',sans-serif]">
      <div className="h-[22px] bg-[#cbd9e8] flex items-center pl-[3px] text-[12px] text-[#111] shrink-0">
        <span className="flex-1">目录</span>
        <div className="mr-[9px]"><Pin /></div>
        <div className="mr-[3px]"><PanelX /></div>
      </div>
      <div className="h-[23px] flex items-center pl-[5px] shrink-0">
        <Tool name="catBack" /><Drop />
        <div className="ml-[3px]"><Tool name="catFwd" /></div>
        <div className="ml-[3px]"><Tool name="catUp" /></div>
        <Tool name="catHome" />
        <div className="ml-[3px]"><Tool name="catDb" /></div>
        <Sep />
        <span className="ml-auto mr-[3px] text-[12px] font-bold text-[#4a5fc0]">»</span>
      </div>
      <div className="h-[28px] flex items-center justify-end pr-[3px] shrink-0">
        <div className="w-[113px] h-[22px] bg-white border border-[#555] flex items-center pl-[2px] text-[12px] text-[#111] overflow-hidden">
          {ICONS.shp}
          <span className="ml-px w-[76px] overflow-hidden whitespace-nowrap">武汉经纬网.shp</span>
          <ChevronDown size={13} color="#444" className="ml-[2px]" />
        </div>
      </div>
      <div className="flex-1 bg-white border-t-2 border-l border-r border-b border-[#828790] mr-[4px] mb-[3px] flex flex-col min-h-0 text-[12px] tracking-[-0.2px] text-[#111]">
        <div className="flex-1 min-h-0 overflow-hidden">
          {CATALOG.map((r, i) => (
            <div key={i} className={`h-[17px] flex items-center whitespace-nowrap overflow-hidden ${r.i ? 'pl-[20px]' : r.c}`}>
              {r.i && <div className="w-[16px] mr-[4px] shrink-0">{ICONS[r.i]}</div>}
              <span className={r.hl ? 'bg-[#efefef] px-px -mx-px' : ''}>{r.t}</span>
            </div>
          ))}
        </div>
        <div className="h-[15px] flex items-center bg-[#f0f0f0] shrink-0">
          <ChevronLeft size={14} color="#555" strokeWidth={3} />
          <div className="ml-[26px] w-[63px] h-full bg-[#cdcdcd]" />
          <div className="ml-auto"><ChevronRight size={14} color="#555" strokeWidth={3} /></div>
        </div>
      </div>
    </div>
  )
}

// ---------- create features ----------
function CreatePanel() {
  return (
    <div className="w-[63px] ml-[4px] flex flex-col shrink-0 overflow-hidden text-[12px]">
      <div className="h-[22px] bg-[#cbd9e8] flex items-center pl-[4px] text-[#111] shrink-0">
        <span className="flex-1">创...</span>
        <div className="mr-[8px]"><Pin /></div>
        <div className="mr-[3px]"><PanelX /></div>
      </div>
      <div className="h-[24px] flex items-center pl-[4px] shrink-0">
        <Tool name="gCreate" />
        <div className="w-0 h-0 border-x-[3px] border-x-transparent border-t-[4px] border-t-[#aaaaaa]" />
        <Tool name="gPages" />
      </div>
      <div className="h-[23px] ml-[5px] border border-[#9a9a9a] flex items-center pl-[3px] text-[#999] shrink-0 whitespace-nowrap">&lt;搜索&gt;</div>
      <div className="h-[26px] flex items-center pl-[3px] shrink-0"><Tool name="gSearch" /><Tool name="gUnsearch" /></div>
      <div className="h-[646px] ml-px border border-[#8a8a8a] border-r-0 bg-[#efefef] pl-[2px] pt-[9px] text-[#a0a0a0] whitespace-nowrap overflow-hidden shrink-0">没有可供...</div>
      <div className="h-[20px] flex items-center justify-end gap-px shrink-0">
        <div className="w-[19px] h-px bg-[#999]" />
        <div className="w-[12px] h-[12px] border border-[#222] flex items-center justify-center">
          <ChevronDown size={9} color="#111" strokeWidth={4} />
        </div>
        <div className="w-[11px] h-[12px] border border-[#222] flex justify-center"><div className="w-px h-full bg-[#222]" /></div>
      </div>
      <div className="flex-1 ml-px border-l border-[#a0a0a0] text-[#555] whitespace-nowrap">
        <div className="h-[24px] mt-[1px] flex items-center pl-[1px]">
          {ICONS.sketchColor}
          <span className="ml-[2px]">构造...</span>
        </div>
        <div className="mt-[9px] pl-[12px] text-[#777]">选择模</div>
      </div>
    </div>
  )
}

// ---------- dialog ----------
const TAB_CELL = 'h-full flex items-center justify-center bg-[#f0f0f0] border-t border-l border-[#d9d9d9] text-[12px] text-[#111] shrink-0'
const ROW1 = [['注记组', 'w-[102px]'], ['范围指示器', 'w-[124px]'], ['框架', 'w-[101px] pr-[10px]'], ['大小和位置', 'w-[123px] border-r pl-[9px]']]
const ROW2L = [['常规', 'w-[74px] pr-[14px]'], ['数据框', 'w-[73px]']]
const ROW2R = [['照明度', 'w-[70px]'], ['格网', 'w-[74px] pr-[12px]'], ['要素缓存', 'w-[82px] border-r']]
const TREE_ROWS = ['102E', '105E', '108E', '111E']
const SR_LINES = ['CGCS2000_3_Degree_GK_CM_114E', 'WKID: 4547 权限: EPSG', '', 'Projection: Gauss_Kruger', 'False_Easting: 500000.0', 'False_Northing: 0.0', 'Central_Meridian: 114.0', 'Scale_Factor: 1.0', 'Latitude_Of_Origin: 0.0', 'Linear Unit: Meter (1.0)']

function ScrollV({ thumb }) {
  return (
    <div className="w-[15px] my-px mr-[2px] bg-[#f0f0f0] flex flex-col items-center shrink-0">
      <div className="h-[17px] flex items-center shrink-0"><ChevronUp size={12} color="#505050" strokeWidth={3} /></div>
      <div className="w-full flex-1 min-h-0"><div className={`w-full bg-[#cdcdcd] ${thumb}`} /></div>
      <div className="h-[17px] flex items-center shrink-0"><ChevronDown size={12} color="#505050" strokeWidth={3} /></div>
    </div>
  )
}

function DialogButton({ children, primary }) {
  return (
    <div className={`w-[86px] h-[28px] flex items-center justify-center bg-[#e1e1e1] text-[12px] text-[#111] ${primary ? 'border-2 border-[#0078d7]' : 'border border-[#adadad]'}`}>{children}</div>
  )
}

function Dialog() {
  return (
    <div className="absolute left-[1249px] top-[140px] w-[471px] h-[615px] bg-[#f0f0f0] shadow-[0_0_14px_rgba(0,0,0,0.4)] flex flex-col text-[#111]">
      <div className="h-[26px] bg-white flex items-center pl-[3px] pr-[8px] text-[12px] shrink-0">
        <span className="flex-1">数据框 属性</span>
        <X size={17} strokeWidth={1} color="#111" />
      </div>
      <div className="h-[11px] shrink-0" />
      <div className="h-[22px] ml-[9px] flex shrink-0">
        {ROW1.map(([t, w]) => <div key={t} className={`${TAB_CELL} ${w}`}>{t}</div>)}
      </div>
      <div className="h-[22px] ml-[9px] flex items-end shrink-0">
        {ROW2L.map(([t, w]) => <div key={t} className={`${TAB_CELL} ${w}`}>{t}</div>)}
        <div className="w-[77px] h-[25px] -mb-px pb-[3px] relative z-10 bg-white border-t border-x border-[#d9d9d9] flex items-center justify-center text-[12px] shrink-0">坐标系</div>
        {ROW2R.map(([t, w]) => <div key={t} className={`${TAB_CELL} ${w}`}>{t}</div>)}
      </div>
      <div className="h-[485px] ml-[8px] w-[453px] bg-white border border-[#d9d9d9] shrink-0 flex flex-col pl-[24px] pt-[22px]">
        <div className="h-[20px] flex items-center shrink-0">
          <div className="ml-[3px] w-[20px]">{ICONS.filter}</div>
          <div className="ml-[4px] w-0 h-0 border-x-[4px] border-x-transparent border-t-[4px] border-t-[#222]" />
          <div className="ml-[8px] w-px h-[18px] bg-[#999]" />
          <div className="ml-[8px] w-[200px] h-[20px] border border-[#7a7a7a] flex items-center pl-[3px] pr-[3px] text-[12px] text-[#8a8a8a] shrink-0">
            <span className="flex-1">在此处输入以进行搜索</span>
            <ChevronDown size={12} color="#555" />
          </div>
          <div className="ml-[7px] w-[18px]">{ICONS.search}</div>
          <div className="ml-[6px] w-[18px]">{ICONS.unsearch}</div>
          <div className="ml-[5px] w-px h-[20px] bg-[#999]" />
          <div className="ml-[9px] w-[18px]">{ICONS.world}</div>
          <div className="ml-[6px] w-0 h-0 border-x-[4px] border-x-transparent border-t-[4px] border-t-[#222]" />
          <div className="ml-[7px] w-[18px]">{ICONS.star}</div>
        </div>
        <div className="mt-[11px] w-[413px] h-[165px] border border-[#828790] flex shrink-0">
          <div className="flex-1 min-w-0 overflow-hidden pt-[1px] text-[12px] tracking-[-0.2px] [font-family:'DejaVu_Sans','Noto_Sans_CJK_SC',sans-serif] text-[#222]">
            <div className="h-[17px] flex items-center pl-[27px]"><ExpandBox /><div className="ml-[5px]">{ICONS.folderOpen}</div><span className="ml-[5px]">Gauss Kruger</span></div>
            <div className="h-[17px] flex items-center pl-[47px]"><ExpandBox plus /><div className="ml-[6px]">{ICONS.folder}</div><span className="ml-[5px]">Asia</span></div>
            <div className="h-[17px] flex items-center pl-[47px]"><ExpandBox plus /><div className="ml-[6px]">{ICONS.folder}</div><span className="ml-[5px]">Beijing 1954</span></div>
            <div className="h-[17px] flex items-center pl-[47px]"><ExpandBox /><div className="ml-[6px]">{ICONS.folderOpen}</div><span className="ml-[5px]">CGCS2000</span></div>
            {TREE_ROWS.map(r => (
              <div key={r} className="h-[17px] flex items-center pl-[80px]">{ICONS.gridGlobe}<span className="ml-[5px] whitespace-nowrap">CGCS2000 3 Degree GK CM {r}</span></div>
            ))}
            <div className="h-[17px] flex items-center pl-[80px]">{ICONS.gridGlobe}<span className="ml-[4px] px-px whitespace-nowrap bg-[#0078d7] text-white outline-1 outline-dotted outline-[#111]">CGCS2000 3 Degree GK CM 114E</span></div>
            <div className="h-[17px] flex items-center pl-[80px]">{ICONS.gridGlobe}<span className="ml-[5px] whitespace-nowrap">CGCS2000 3 Degree GK CM 117E</span></div>
          </div>
          <ScrollV thumb="mt-[9px] h-[17px]" />
        </div>
        <div className="h-[23px] flex items-center pt-[6px] text-[12px] shrink-0">当前坐标系:</div>
        <div className="w-[413px] h-[150px] border border-[#6e6e6e] flex shrink-0">
          <div className="flex-1 min-w-0 pl-[4px] pt-[3px] text-[11px] text-[#222]">
            {SR_LINES.map((l, i) => <div key={i} className="h-[13px] leading-[13px] whitespace-nowrap">{l}</div>)}
          </div>
          <ScrollV thumb="h-[62px]" />
        </div>
        <div className="mt-[63px] -ml-px w-[121px] h-[21px] bg-[#e1e1e1] border border-[#adadad] flex items-center justify-center text-[12px] shrink-0">变换(T)...</div>
      </div>
      <div className="flex justify-end gap-[9px] pr-[7px] pt-[14px]">
        <DialogButton primary>确定</DialogButton>
        <DialogButton>取消</DialogButton>
        <DialogButton>应用(A)</DialogButton>
      </div>
    </div>
  )
}

// ---------- bottom status ----------
// the desktop peeking out under the window: only the tops of its icons show
const STRIP = [
  ['w-[30px]', ''], ['w-[6px]', 'self-end h-[2px] bg-[#333]'], ['w-[26px]', ''], ['w-[5px]', 'self-end h-[2px] bg-[#333]'], ['w-[28px]', ''], ['w-[4px]', 'self-end h-[2px] bg-[#333]'],
  ['w-[211px]', ''], ['w-[12px]', 'self-end h-[3px] bg-[#e8c93a]'], ['w-[25px]', ''], ['w-[6px]', 'self-end h-[3px] bg-[#2fb5b5]'], ['w-[102px]', ''], ['w-[6px]', 'self-end h-[3px] bg-[#ecd060]'],
  ['w-[109px]', ''], ['w-[5px]', 'self-end h-[2px] bg-[#222]'], ['w-[65px]', ''], ['w-[12px]', 'self-end h-[3px] bg-[#3a6fd8]'], ['w-[12px]', ''],
  ['w-[36px]', 'bg-[#f8f1ee]'], ['w-[18px]', ''], ['w-[5px]', 'self-end h-[2px] bg-[#333]'], ['w-[62px]', ''], ['w-[14px]', 'self-end h-[3px] bg-[#777]'], ['w-[91px]', ''],
  ['w-[27px]', 'bg-[#e8d88f]'], ['w-[118px]', ''], ['w-[175px]', 'bg-gradient-to-r from-[#d2eee2] via-[#cdeee2] to-[#e6eee4]'],
  ['w-[270px]', ''], ['w-[40px]', 'bg-[#f6f6f6]'], ['w-[37px]', ''], ['w-[6px]', 'self-end h-[2px] bg-[#333]'], ['w-[27px]', ''], ['w-[6px]', 'self-end h-[3px] bg-[#ecd060]'], ['w-[150px]', ''], ['w-[14px]', 'self-end h-[3px] bg-[#777]'], ['w-[70px]', ''], ['w-[10px]', 'self-end h-[2px] bg-[#222]'],
]

function StatusBar() {
  return (
    <div className="h-[20px] bg-[#efefef] flex justify-end shrink-0 text-[12px] text-[#111]">
      <div className="w-[128px] border border-[#e3e3e3] border-b-0 mt-[1px]" />
      <div className="w-[21px] border-r border-[#e3e3e3] mt-[1px]" />
      <div className="w-[285px] pl-[3px] leading-[20px] whitespace-nowrap">113.115&nbsp;&nbsp;31.313 十进制度</div>
    </div>
  )
}

export default function App() {
  return (
    <div className="relative w-[1928px] h-[1058px] overflow-hidden bg-white flex flex-col [font-family:'Liberation_Sans','Noto_Sans_CJK_SC',sans-serif]">
      <TitleBar />
      <div className="flex flex-1 min-h-0">
        <div className="w-[8px] bg-[#fafafa] flex flex-col shrink-0">
          <div className="h-[54px] mt-[114px] bg-[#e3eef5]" />
          <div className="h-[20px] mt-[28px] bg-white border-y border-r border-[#999]" />
        </div>
        <div className="flex-1 min-w-0 flex flex-col bg-[#f3f3f3]">
          <div className="h-[27px] flex items-center pl-[12px] gap-[15.6px] text-[12px] text-[#111] shrink-0">
            {MENUS.map(m => <span key={m}>{m}</span>)}
          </div>
          <Toolbar1 />
          <Toolbar2 />
          <div className="flex-1 min-h-0 flex">
            <TocPanel />
            <MapColumn />
            <CatalogPanel />
            <CreatePanel />
          </div>
          <StatusBar />
        </div>
      </div>
      <div className="h-[8px] bg-[#f3e4e2] flex shrink-0 overflow-hidden">
        {STRIP.map(([w, c], i) => <div key={i} className={`${w} h-full shrink-0 ${c}`} />)}
      </div>
      <Dialog />
      {/* floating USB widget in the top right corner */}
      <div className="absolute left-[1900px] top-[25px] w-[28px] h-[42px] bg-[#3c3c3c] rounded-l-[4px] flex items-center justify-center">
        <svg width="16" height="26" viewBox="0 0 16 26" className="block">
          <path d="M4.5 1h7v6h-7zM2 7h12v12a6 6 0 0 1-12 0z" fill="none" stroke="#e8961e" strokeWidth="1.3" />
        </svg>
      </div>
    </div>
  )
}
